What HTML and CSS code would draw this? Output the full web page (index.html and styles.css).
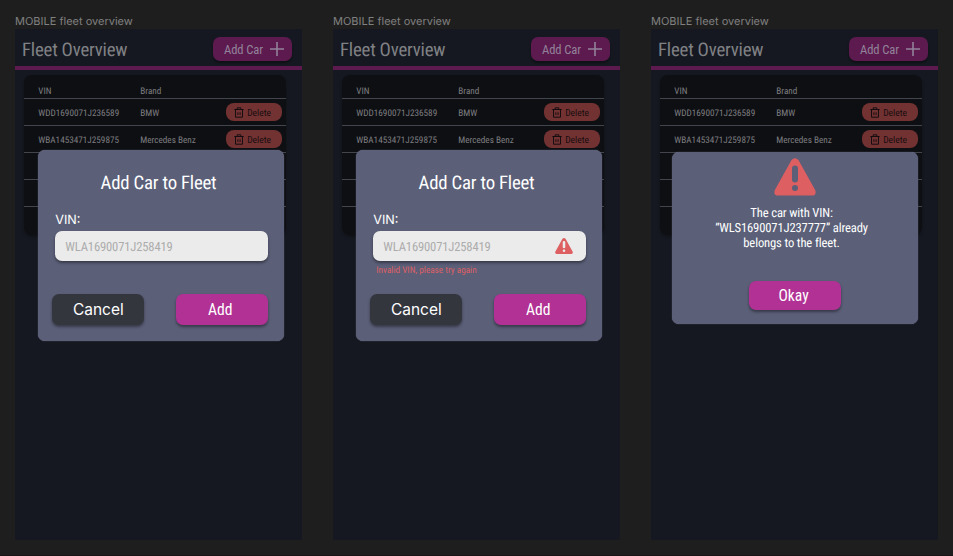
FILE: index.html
```html
<!DOCTYPE html>
<html lang="en">
<head>
<meta charset="utf-8">
<title>Fleet overview</title>
<link rel="stylesheet" href="styles.css">
</head>
<body>
<svg class="defs" width="0" height="0" aria-hidden="true">
  <symbol id="trash" viewBox="0 0 10 11"><path d="M.3 2.5h9.4M3.2 2.4V.8h3.6v1.6M1.5 2.8v7.4h7V2.8M3.9 5.3v2.6M6.1 5.3v2.6" fill="none" stroke="currentColor" stroke-width="1"/></symbol>
  <symbol id="plus" viewBox="0 0 14 14"><path d="M7 0v14M0 7h14" fill="none" stroke="currentColor" stroke-width="1.6"/></symbol>
  <symbol id="warning" viewBox="0 0 42 38"><path fill="currentColor" fill-rule="evenodd" d="M17.4 2.3Q21-1.8 24.6 2.3L41.3 32.2Q42.8 37.4 38 37.5H4Q-.8 37.4.7 32.2ZM21 7.5a3 3 0 0 0-3 3v11a3 3 0 0 0 6 0v-11a3 3 0 0 0-3-3ZM21 27a3 3 0 1 0 0 6 3 3 0 0 0 0-6Z"/></symbol>
</svg>
<main class="board">
  <section class="artboard">
    <h2 class="label">MOBILE fleet overview</h2>
    <div class="phone">
      <header class="bar"><h1 class="heading">Fleet Overview</h1><button class="add-car"><span>Add Car</span><svg class="plus"><use href="#plus"/></svg></button></header>
      <div class="table">
        <div class="row head"><span>VIN</span><span>Brand</span></div>
        <div class="row"><span>WDD1690071J236589</span><span>BMW</span><button class="delete"><svg class="trash"><use href="#trash"/></svg><span>Delete</span></button></div>
        <div class="row"><span>WBA1453471J259875</span><span>Mercedes Benz</span><button class="delete"><svg class="trash"><use href="#trash"/></svg><span>Delete</span></button></div>
        <div class="row"></div><div class="row"></div><div class="row last"></div>
      </div>
      <div class="modal">
        <h3 class="title">Add Car to Fleet</h3>
        <div class="vin">VIN:</div>
        <div class="field"><span>WLA1690071J258419</span></div>
        <div class="error"></div>
        <div class="actions"><button class="btn cancel">Cancel</button><button class="btn primary">Add</button></div>
      </div>
    </div>
  </section>
  <section class="artboard">
    <h2 class="label">MOBILE fleet overview</h2>
    <div class="phone">
      <header class="bar"><h1 class="heading">Fleet Overview</h1><button class="add-car"><span>Add Car</span><svg class="plus"><use href="#plus"/></svg></button></header>
      <div class="table">
        <div class="row head"><span>VIN</span><span>Brand</span></div>
        <div class="row"><span>WDD1690071J236589</span><span>BMW</span><button class="delete"><svg class="trash"><use href="#trash"/></svg><span>Delete</span></button></div>
        <div class="row"><span>WBA1453471J259875</span><span>Mercedes Benz</span><button class="delete"><svg class="trash"><use href="#trash"/></svg><span>Delete</span></button></div>
        <div class="row"></div><div class="row"></div><div class="row last"></div>
      </div>
      <div class="modal">
        <h3 class="title">Add Car to Fleet</h3>
        <div class="vin">VIN:</div>
        <div class="field"><span>WLA1690071J258419</span><svg class="warn-small"><use href="#warning"/></svg></div>
        <div class="error">Invalid VIN, please try again</div>
        <div class="actions"><button class="btn cancel">Cancel</button><button class="btn primary">Add</button></div>
      </div>
    </div>
  </section>
  <section class="artboard">
    <h2 class="label">MOBILE fleet overview</h2>
    <div class="phone">
      <header class="bar"><h1 class="heading">Fleet Overview</h1><button class="add-car"><span>Add Car</span><svg class="plus"><use href="#plus"/></svg></button></header>
      <div class="table">
        <div class="row head"><span>VIN</span><span>Brand</span></div>
        <div class="row"><span>WDD1690071J236589</span><span>BMW</span><button class="delete"><svg class="trash"><use href="#trash"/></svg><span>Delete</span></button></div>
        <div class="row"><span>WBA1453471J259875</span><span>Mercedes Benz</span><button class="delete"><svg class="trash"><use href="#trash"/></svg><span>Delete</span></button></div>
        <div class="row"></div><div class="row"></div><div class="row last"></div>
      </div>
      <div class="modal notice">
        <svg class="warn-large"><use href="#warning"/></svg>
        <p class="message">The car with VIN:<br>“WLS1690071J237777” already<br>belongs to the fleet.</p>
        <button class="btn primary okay">Okay</button>
      </div>
    </div>
  </section>
</main>
</body>
</html>
```
FILE: styles.css
```css
* { box-sizing: border-box; }
html, body { height: 100%; }
body { margin: 0; background: #1e1e1e; overflow: hidden; font-family: "Roboto Condensed", Roboto, sans-serif; font-stretch: 75%; text-rendering: geometricPrecision; }
h1, h2, h3, p { margin: 0; font-weight: 400; }
button { border: 0; padding: 0; font: inherit; font-stretch: 75%; color: inherit; }
svg { display: block; flex: none; }
.defs { position: absolute; }
.board { display: flex; gap: 31px; padding: 14px 0 0 15px; height: 555px; box-shadow: 0 1px #191416; }
.artboard { width: 287px; flex: none; }
.label { height: 15px; font: 11px/15px Inter, sans-serif; color: #808080; white-space: nowrap; }
.phone { position: relative; height: 511px; background: #151820; white-space: nowrap; }
.bar { height: 41px; display: flex; align-items: center; justify-content: space-between; padding: 0 10px 0 7px; border-bottom: 4px solid #5d1a4f; }
.heading { font-size: 18.8px; letter-spacing: -0.2px; line-height: 22px; color: #808185; padding-top: 4px; }
.add-car { display: flex; align-items: center; justify-content: space-between; width: 79px; height: 24px; margin-top: 3px; padding: 0 8px 0 11px; border-radius: 7px; background: #5d1a4f; color: #92829a; font-size: 12.6px; letter-spacing: -0.1px; box-shadow: 0 2px 2px #0005; }
.plus { width: 14px; height: 14px; }
.table { margin: 4.5px 16px 0 9.3px; height: 160px; border-radius: 8px; background: #0e0f13; box-shadow: 0 2px 3px #0004; color: #7d7d80; font-size: 9.2px; }
.row { display: grid; grid-template-columns: 102px 86px 55.5px; align-items: center; height: 27px; padding: 0 0 0 14px; border-bottom: 1px solid #42444e; }
.row > span { padding-top: 2px; }
.head { height: 24.5px; padding-top: 9px; }
.last { border-bottom: 0; }
.delete { display: flex; align-items: center; justify-content: center; gap: 3px; width: 55.5px; height: 17.5px; padding-right: 3px; border-radius: 8px; background: #733232; color: #160d10; font-size: 9.5px; }
.trash { width: 10px; height: 11px; }
.modal { position: absolute; left: 23.3px; top: 121.4px; width: 245.5px; height: 190.5px; border-radius: 7px; background: #5b5f78; padding: 21px 16px 0 17px; color: #fff; box-shadow: 0 0 1px #8888aa; }
.title { height: 24px; font-size: 18.8px; letter-spacing: -0.2px; line-height: 24px; text-align: center; padding-right: 6px; }
.vin { height: 16px; margin-top: 18px; font: 12.6px/16px Inter, sans-serif; }
.field { display: flex; align-items: center; justify-content: space-between; height: 30.5px; margin-top: 1.5px; padding: 0 13px 0 10px; border-radius: 7px; background: #ebebeb; color: #acacac; font-size: 12.6px; letter-spacing: -0.15px; box-shadow: 0 2px 3px #0006; }
.field span { padding-top: 2px; }
.warn-small { width: 18px; height: 18px; color: #dd5f61; }
.error { height: 17px; font-size: 9.2px; line-height: 19px; padding-left: 3px; color: #dc5f66; }
.actions { display: flex; justify-content: space-between; margin: 15.5px 0 0 -3px; }
.btn { display: flex; align-items: center; justify-content: center; width: 92px; height: 31px; border-radius: 7px; box-shadow: 0 2px 3px #0006; font-size: 15.6px; color: #fff; }
.cancel { background: #34363e; font: 15.5px Inter, sans-serif; padding-top: 1px; }
.primary { background: #b13194; padding: 2px 3px 0 0; }
.notice { left: 21.3px; top: 123.4px; height: 172px; padding: 5.6px 0 0; display: flex; flex-direction: column; align-items: center; }
.warn-large { width: 42px; height: 38px; color: #dd5f61; }
.message { margin-top: 11.4px; font-size: 12.6px; letter-spacing: -0.14px; line-height: 14.6px; text-align: center; padding-right: 7px; }
.okay { height: 28.5px; margin-top: 30px; }
```
